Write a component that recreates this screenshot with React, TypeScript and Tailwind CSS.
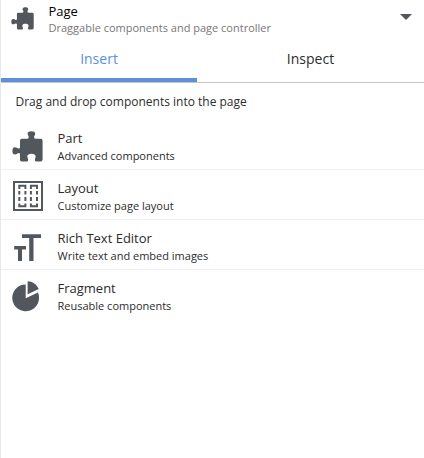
import React from "react";

function PuzzleIcon({ className }: { className: string }) {
  return (
    <svg viewBox="0 0 31 31" className={className} fill="#52575d">
      <path d="M8 9.5Q8 7.8 9.7 7.8H15.2Q17.2 7.8 16.7 5.8C16.5 4.8 15.6 4.2 15.6 2.6C15.6 1 17.2 .3 19.4 .3C21.6 .3 23.2 1 23.2 2.6C23.2 4.2 22.3 4.8 22.1 5.8Q21.7 7.8 23.7 7.8H28.6Q30.6 7.8 30.6 9.8V28.4Q30.6 30.4 28.6 30.4H24.4Q22.6 30.4 22.9 28.8C23 27.6 23.6 26.8 23.6 25.3C23.6 23.6 21.9 22.7 19.5 22.7C17 22.7 15.3 23.6 15.3 25.3C15.3 26.8 16.1 27.6 16.2 28.8Q16.4 30.4 14.7 30.4H9.7Q8 30.4 8 28.7V23.4Q8 21.8 6.2 22.2C5.1 22.4 4.5 23.4 2.8 23.4C1.2 23.4 .4 22 .4 19.9C.4 17.8 1.2 16.3 2.8 16.3C4.5 16.3 5.1 17.1 6.2 17.4Q8 17.8 8 16.2Z" />
    </svg>
  );
}

function LayoutIcon() {
  return (
    <svg viewBox="0 0 30 30" className="ml-px size-[30px]" fill="none" stroke="#52575d">
      <path d="M1 1H29V29H1Z" strokeWidth="2" />
      <path
        d="M6.3 8V4.7H12.4V8M6.3 22.5V25.2H12.4V22.5M17.9 8V4.7H24V8M17.9 22.5V25.2H24V22.5M6.3 10V13.4M12.4 10V13.4M17.9 10V13.4M24 10V13.4M6.3 16V20M12.4 16V20M17.9 16V20M24 16V20"
        strokeWidth="2"
      />
    </svg>
  );
}

function TextIcon() {
  return (
    <svg viewBox="0 0 30 30" className="ml-px size-[30px]" fill="#52575d">
      <path d="M9 3.2H28V7.1H20.5V30H16.2V7.1H9ZM1.2 15H13V18.5H9V30H5V18.5H1.2Z" />
    </svg>
  );
}

function FragmentIcon() {
  return (
    <svg viewBox="0 0 30 31" className="h-[31px] w-[30px]" fill="#52575d">
      <path d="M13.7 3.4V17.2L26 11.6A13.4 13.4 0 1 1 13.7 3.4Z" />
      <path d="M15.6 .2V13.3L26.8 8C24.7 3.4 20.5 .3 15.6 .2Z" />
    </svg>
  );
}

const items = [
  { title: "Part", note: "Advanced components", icon: <PuzzleIcon className="size-[31px]" /> },
  { title: "Layout", note: "Customize page layout", icon: <LayoutIcon /> },
  { title: "Rich Text Editor", note: "Write text and embed images", icon: <TextIcon /> },
  { title: "Fragment", note: "Reusable components", icon: <FragmentIcon /> },
];

export default function App() {
  return (
    <div className="h-[458px] w-[424px] overflow-hidden border-l border-[#e9e9e9] bg-white font-['Open_Sans','Noto_Sans',sans-serif] text-[#2c2c2c]">
      <header className="flex h-9 items-start pl-[10px]">
        <PuzzleIcon className="mt-[7px] size-[23px] shrink-0" />
        <div className="ml-[14.5px] flex-1 whitespace-nowrap pt-[3px]">
          <h1 className="text-[13px] leading-[17px] text-black">Page</h1>
          <p className="text-[11px] leading-4 text-[#777]">Draggable components and page controller</p>
        </div>
        <svg viewBox="0 0 12 6" className="mr-3 mt-[14px] h-[6px] w-3" fill="#52575d">
          <path d="M0 0H12L6 6Z" />
        </svg>
      </header>
      <nav className="flex h-[47px] border-b border-[#c6c6c6] text-[14px] leading-[46px]">
        <div className="h-[46px] w-[196px] border-b-4 border-[#5c90db] text-center text-[#5c90db]">Insert</div>
        <div className="flex-1 text-center">Inspect</div>
      </nav>
      <p className="h-[37px] whitespace-nowrap pl-[14.5px] text-[12px] leading-[37px]">
        Drag and drop components into the page
      </p>
      <ul>
        {items.map((item) => (
          <li key={item.title} className="flex h-[50px] border-b border-[#f0f0f0] pl-[11px] last:border-b-0">
            <div className="w-[45.5px] shrink-0 pt-[11px]">{item.icon}</div>
            <div className="whitespace-nowrap pt-[9px]">
              <h2 className="text-[13px] leading-[18px]">{item.title}</h2>
              <p className="text-[11px] leading-[17px]">{item.note}</p>
            </div>
          </li>
        ))}
      </ul>
    </div>
  );
}
